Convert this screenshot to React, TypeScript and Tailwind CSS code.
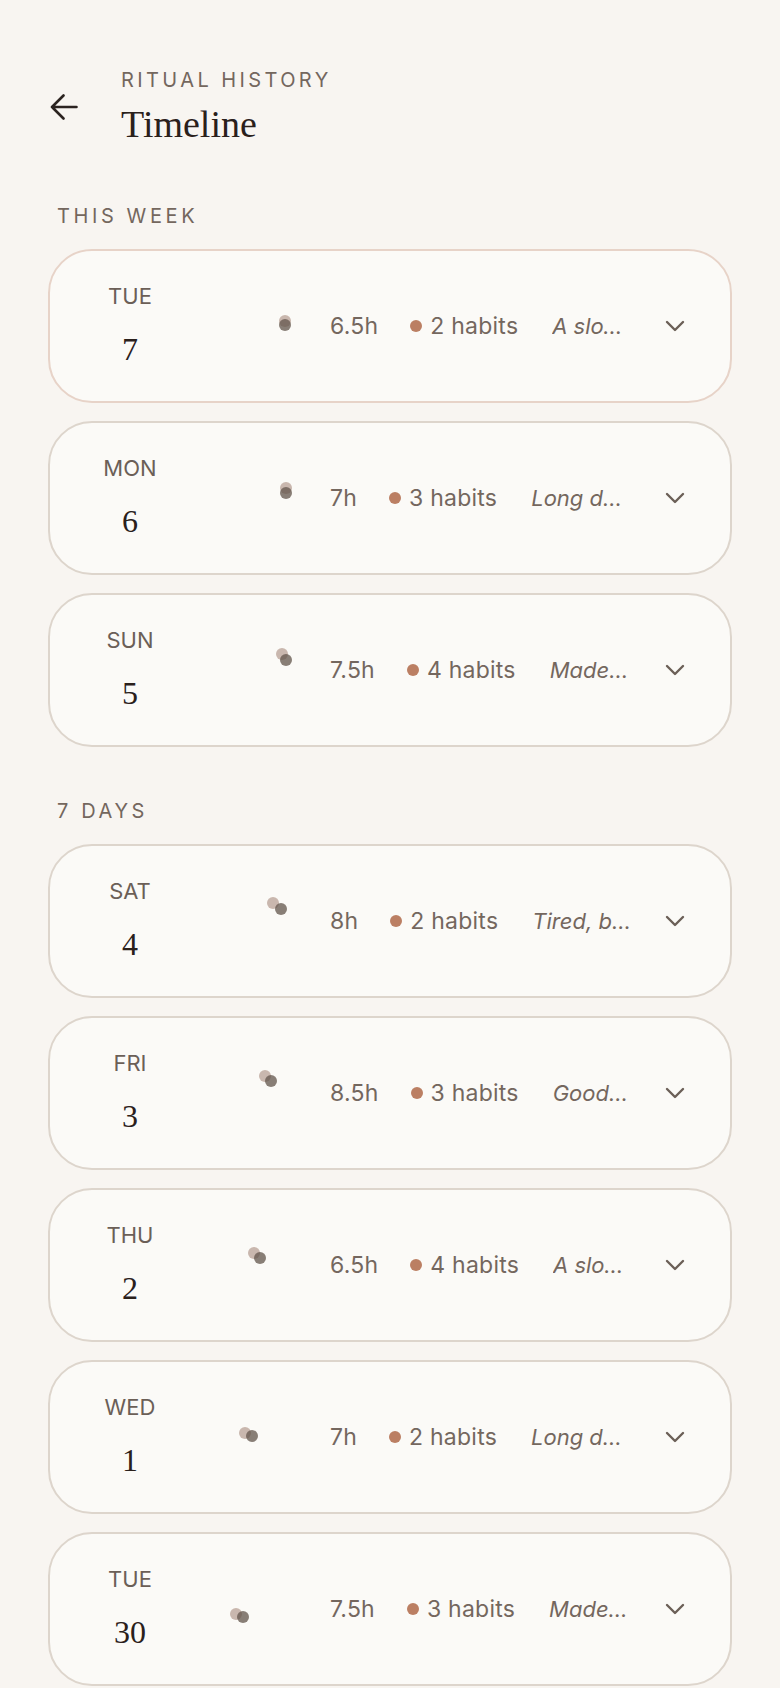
type Dot = { x: number; y: number };

type Entry = {
  day: string;
  date: string;
  hours: string;
  habits: number;
  note: string;
  light: Dot;
  dark: Dot;
  today?: boolean;
};

const thisWeek: Entry[] = [
  {
    day: "TUE",
    date: "7",
    hours: "6.5h",
    habits: 2,
    note: "A slow morning with tea and journaling",
    light: { x: 107, y: 19 },
    dark: { x: 107, y: 23 },
    today: true,
  },
  {
    day: "MON",
    date: "6",
    hours: "7h",
    habits: 3,
    note: "Long day at work, skipped the walk",
    light: { x: 108, y: 14 },
    dark: { x: 108, y: 19 },
  },
  {
    day: "SUN",
    date: "5",
    hours: "7.5h",
    habits: 4,
    note: "Made space for reading before bed",
    light: { x: 104, y: 8 },
    dark: { x: 108, y: 14 },
  },
];

const lastDays: Entry[] = [
  {
    day: "SAT",
    date: "4",
    hours: "8h",
    habits: 2,
    note: "Tired, but kept the evening ritual",
    light: { x: 95, y: 6 },
    dark: { x: 103, y: 12 },
  },
  {
    day: "FRI",
    date: "3",
    hours: "8.5h",
    habits: 3,
    note: "Good energy all day long",
    light: { x: 87, y: 7 },
    dark: { x: 93, y: 12 },
  },
  {
    day: "THU",
    date: "2",
    hours: "6.5h",
    habits: 4,
    note: "A slow morning with tea and journaling",
    light: { x: 76, y: 12 },
    dark: { x: 82, y: 17 },
  },
  {
    day: "WED",
    date: "1",
    hours: "7h",
    habits: 2,
    note: "Long day at work, skipped the walk",
    light: { x: 67, y: 20 },
    dark: { x: 74, y: 23 },
  },
  {
    day: "TUE",
    date: "30",
    hours: "7.5h",
    habits: 3,
    note: "Made space for reading before bed",
    light: { x: 58, y: 29 },
    dark: { x: 65, y: 32 },
  },
];

function DayCard({ entry }: { entry: Entry }) {
  return (
    <div
      className={`h-[154px] rounded-[44px] border-2 bg-[#fbfaf7] pl-[38px] pr-[44px] flex items-center ${
        entry.today ? "border-[#e7d3c8]" : "border-[#ddd5cc]"
      }`}
    >
      {/* date */}
      <div className="w-[84px] shrink-0 flex flex-col items-center">
        <span className="text-[22px] leading-[26px] text-[#6b5f57]">{entry.day}</span>
        <span className="mt-[20px] text-[32px] leading-[40px] text-[#2a201b] font-['Liberation_Serif',serif]">
          {entry.date}
        </span>
      </div>

      {/* sleep window dots */}
      <div className="relative w-[158px] h-[60px] shrink-0">
        <span
          className="absolute w-[12px] h-[12px] rounded-full bg-[#a88a7d]/60"
          style={{ left: entry.light.x, top: entry.light.y }}
        />
        <span
          className="absolute w-[12px] h-[12px] rounded-full bg-[#62544b]/75"
          style={{ left: entry.dark.x, top: entry.dark.y }}
        />
      </div>

      <span className="shrink-0 text-[23px] tracking-[0.01em] text-[#74675e]">{entry.hours}</span>

      <div className="ml-[32px] shrink-0 flex items-center gap-[8px]">
        <span className="w-[12px] h-[12px] rounded-full bg-[#bb7f63]" />
        <span className="text-[23px] tracking-[0.01em] text-[#74675e]">{entry.habits} habits</span>
      </div>

      <span className="ml-[34px] flex-1 min-w-0 truncate italic text-[22px] text-[#74675e]">
        {entry.note}
      </span>

      <svg className="ml-[32px] shrink-0" width="22" height="14" viewBox="0 0 22 14" fill="none">
        <path d="M3 3 L11 11 L19 3" stroke="#6b5f57" strokeWidth="2.4" strokeLinecap="round" strokeLinejoin="round" />
      </svg>
    </div>
  );
}

export default function App() {
  return (
    <div className="min-h-screen bg-[#f8f5f1] font-['Inter',sans-serif] px-[48px] pt-[68px] pb-[40px]">
      {/* Header */}
      <header className="flex items-center pl-[2px]">
        <button className="w-[28px] h-[28px] flex items-center justify-center text-[#2b2320]">
          <svg width="28" height="26" viewBox="0 0 28 26" fill="none">
            <path
              d="M26.5 13 H2 M13.5 1.5 L2 13 L13.5 24.5"
              stroke="currentColor"
              strokeWidth="2.6"
              strokeLinecap="round"
              strokeLinejoin="round"
            />
          </svg>
        </button>
        <div className="ml-[43px] flex flex-col">
          <span className="text-[20px] leading-[24px] tracking-[0.17em] text-[#74675e]">RITUAL HISTORY</span>
          <h1 className="mt-[10px] text-[38px] leading-[44px] text-[#2a201b] font-['Liberation_Serif',serif]">
            Timeline
          </h1>
        </div>
      </header>

      {/* This week */}
      <section className="mt-[58px]">
        <h2 className="pl-[9px] mb-[21px] text-[20px] leading-[24px] tracking-[0.18em] text-[#74675e]">THIS WEEK</h2>
        <div className="flex flex-col gap-[18px]">
          {thisWeek.map((e, i) => (
            <DayCard key={i} entry={e} />
          ))}
        </div>
      </section>

      {/* 7 days */}
      <section className="mt-[52px]">
        <h2 className="pl-[9px] mb-[21px] text-[20px] leading-[24px] tracking-[0.18em] text-[#74675e]">7 DAYS</h2>
        <div className="flex flex-col gap-[18px]">
          {lastDays.map((e, i) => (
            <DayCard key={i} entry={e} />
          ))}
        </div>
      </section>
    </div>
  );
}
